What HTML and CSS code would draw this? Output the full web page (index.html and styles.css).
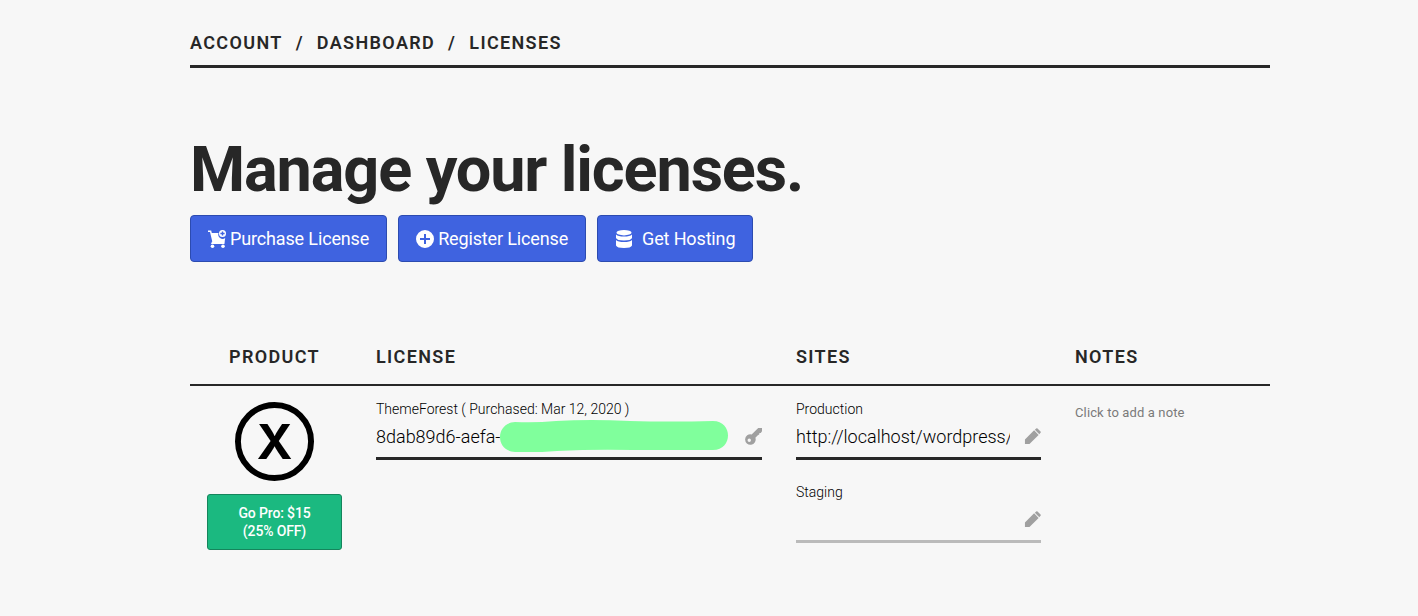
FILE: index.html
```html
<!DOCTYPE html>
<html lang="en">
<head>
    <meta charset="UTF-8">
    <meta name="viewport" content="width=device-width, initial-scale=1.0">
    <title>Licenses</title>
    <link rel="stylesheet" href="styles.css">
</head>
<body>
    <div class="container">
        <nav class="breadcrumbs">
            <a href="#">Account</a>
            <span>/</span>
            <a href="#">Dashboard</a>
            <span>/</span>
            <a href="#">Licenses</a>
        </nav>

        <h1>Manage your licenses.</h1>

        <div class="actions">
            <button type="button" class="btn">
                <svg class="icon" viewBox="1 1 18 18" fill="currentColor">
                    <path d="M1 1.500h3.200l.6 2.500H11.500a4.400 4.400 0 0 0 6.700 5L17.500 13.500H5.500L3 3H1z"/>
                    <path d="M5 12.500h12.500V15H4z"/>
                    <circle cx="5.500" cy="17.200" r="1.800"/>
                    <circle cx="16" cy="17.200" r="1.800"/>
                    <path fill-rule="evenodd" d="M15.500 1a3.500 3.500 0 1 1 0 7 3.500 3.500 0 0 1 0-7zm-.7 1.400v1.400h-1.400v1.400h1.400v1.400h1.400V5.200h1.400V3.800h-1.400V2.400z"/>
                </svg>
                Purchase License
            </button>
            <button type="button" class="btn">
                <svg class="icon" viewBox="1 1 18 18" fill="currentColor">
                    <path fill-rule="evenodd" d="M10 1a9 9 0 1 1 0 18 9 9 0 0 1 0-18zM9 5v4H5v2h4v4h2v-4h4V9h-4V5z"/>
                </svg>
                Register License
            </button>
            <button type="button" class="btn btn-hosting">
                <svg class="icon" viewBox="1 1 18 18" fill="currentColor">
                    <ellipse cx="10" cy="3.700" rx="7.500" ry="2.700"/>
                    <path d="M2 5.500q2 2 8 2t8-2V9q-1 2.500-8 2.500T2 9z"/>
                    <path d="M2 11q2 2 8 2t8-2v5.500q-1 2.500-8 2.500t-8-2.500z"/>
                </svg>
                Get Hosting
            </button>
        </div>

        <table class="licenses">
            <thead>
                <tr>
                    <th class="col-product">Product</th>
                    <th class="col-license">License</th>
                    <th class="col-sites">Sites</th>
                    <th class="col-notes">Notes</th>
                </tr>
            </thead>
            <tbody>
                <tr>
                    <td class="col-product">
                        <svg class="logo" viewBox="0 0 80 80">
                            <circle cx="40" cy="40" r="37" fill="none" stroke="#000" stroke-width="6"/>
                            <text x="40" y="58" text-anchor="middle">X</text>
                        </svg>
                        <button type="button" class="btn-pro">Go Pro: $15<br>(25% OFF)</button>
                    </td>
                    <td>
                        <div class="field">
                            <label for="license">ThemeForest ( Purchased: Mar 12, 2020 )</label>
                            <div class="field-row">
                                <input type="text" id="license" value="8dab89d6-aefa-">
                                <svg class="mask" viewBox="0 0 228 32">
                                    <path fill="#80ff9c" d="M15 2Q35 3 56 1 90-1 130 1q40 1 83 0c20 0 20 29 0 29h-80Q95 29 57 31q-23 2-42 1C-5 31-5 3 15 2z"/>
                                </svg>
                                <button type="button" class="btn-icon" aria-label="Show key">
                                    <svg viewBox="0 0 18 18" fill="currentColor">
                                        <path fill-rule="evenodd" d="M14 0h4v3.500l-1.300 1.700h-1.500v1.500l-2.200 1.500-2 2.200a5.600 5.600 0 1 1-4-3.600zM4.500 11.100a1.800 1.800 0 1 0 0 3.600 1.800 1.800 0 0 0 0-3.600z"/>
                                    </svg>
                                </button>
                            </div>
                        </div>
                    </td>
                    <td>
                        <div class="field">
                            <label for="production">Production</label>
                            <div class="field-row">
                                <input type="text" id="production" value="http://localhost/wordpress/">
                                <button type="button" class="btn-icon" aria-label="Edit production site">
                                    <svg viewBox="0 0 18 18" fill="currentColor">
                                        <path d="M1 12.200 10.700 2.500l4.800 4.800L5.800 17H1zM11.500 1.800 12.900.5q.7-.6 1.400 0L17.500 3.700q.6.700 0 1.400l-1.300 1.400z"/>
                                    </svg>
                                </button>
                            </div>
                        </div>
                        <div class="field field-empty">
                            <label for="staging">Staging</label>
                            <div class="field-row">
                                <input type="text" id="staging" value="">
                                <button type="button" class="btn-icon" aria-label="Edit staging site">
                                    <svg viewBox="0 0 18 18" fill="currentColor">
                                        <path d="M1 12.200 10.700 2.500l4.800 4.800L5.800 17H1zM11.500 1.800 12.900.5q.7-.6 1.400 0L17.500 3.700q.6.700 0 1.400l-1.300 1.400z"/>
                                    </svg>
                                </button>
                            </div>
                        </div>
                    </td>
                    <td>
                        <button type="button" class="btn-note">Click to add a note</button>
                    </td>
                </tr>
            </tbody>
        </table>
    </div>
</body>
</html>
```
FILE: styles.css
```css
* {
    box-sizing: border-box;
}
body {
    margin: 0;
    padding: 32px 0 32px 42px;
    background: #f7f7f7;
    color: #272727;
    font-family: Roboto, sans-serif;
    font-size: 18px;
}
button, input {
    font-family: inherit;
    color: inherit;
}
.container {
    max-width: 1080px;
    margin: 0 auto;
}
.breadcrumbs {
    display: flex;
    gap: 13px;
    padding-bottom: 11px;
    border-bottom: 3px solid #272727;
    font-weight: 600;
    line-height: 22px;
    letter-spacing: 0.075em;
    text-transform: uppercase;
}
.breadcrumbs a {
    color: inherit;
    text-decoration: none;
}
h1 {
    margin: 68px 0 11px;
    font-size: 63px;
    font-weight: 700;
    line-height: 68px;
    letter-spacing: -0.018em;
}
.actions {
    display: flex;
    gap: 11px;
}
.btn {
    display: flex;
    align-items: center;
    gap: 4px;
    height: 47px;
    padding: 0 17px;
    border: 1px solid #2c4bb0;
    border-radius: 4px;
    background: #3f63e0;
    color: #fff;
    font-size: 18px;
    letter-spacing: -0.008em;
    cursor: pointer;
}
.btn-hosting {
    gap: 9px;
}
.icon {
    width: 18px;
    height: 18px;
}

/* licenses table */
.licenses {
    width: 100%;
    margin-top: 65px;
    border-collapse: collapse;
    table-layout: fixed;
}
th, td {
    padding: 0 17px;
    text-align: left;
    vertical-align: top;
}
th {
    height: 58px;
    padding-bottom: 17px;
    border-bottom: 2px solid #272727;
    font-weight: 600;
    letter-spacing: 0.075em;
    text-transform: uppercase;
    vertical-align: bottom;
}
td {
    padding-top: 14px;
}
.col-product {
    width: 169px;
    text-align: center;
}
.col-license {
    width: 420px;
}
.col-sites {
    width: 279px;
}
.logo {
    display: block;
    width: 79px;
    height: 79px;
    margin: 2px auto 13px;
}
.logo text {
    font-family: Inter, sans-serif;
    font-size: 49px;
    font-weight: 650;
}
.btn-pro {
    width: 100%;
    height: 56px;
    padding: 0;
    border: 1px solid #15855c;
    border-radius: 3px;
    background: #1bb980;
    color: #fff;
    font-size: 14px;
    font-weight: 500;
    line-height: 18px;
    letter-spacing: -0.01em;
    cursor: pointer;
}
.field {
    margin-bottom: 23px;
    border-bottom: 3px solid #272727;
}
.field-empty {
    border-color: #bbb;
}
.field label {
    display: block;
    color: #000;
    font-size: 14px;
    font-weight: 300;
    line-height: 18px;
}
.field-row {
    position: relative;
    display: flex;
    align-items: center;
    gap: 14px;
    height: 39px;
    padding-bottom: 2px;
}
.field input {
    flex: 1;
    min-width: 0;
    padding: 0;
    border: 0;
    outline: 0;
    background: transparent;
    color: #000;
    font-size: 18px;
    font-weight: 300;
}
.mask {
    position: absolute;
    left: 124px;
    top: 2px;
    width: 228px;
    height: 32px;
}
.btn-icon {
    width: 17px;
    height: 17px;
    padding: 0;
    border: 0;
    background: none;
    color: #a0a0a0;
    cursor: pointer;
}
.btn-icon svg {
    display: block;
    width: 100%;
}
.btn-note {
    padding: 0;
    border: 0;
    background: none;
    color: #7a7a7a;
    font-size: 13px;
    line-height: 24px;
    letter-spacing: 0.01em;
    cursor: pointer;
}
```
